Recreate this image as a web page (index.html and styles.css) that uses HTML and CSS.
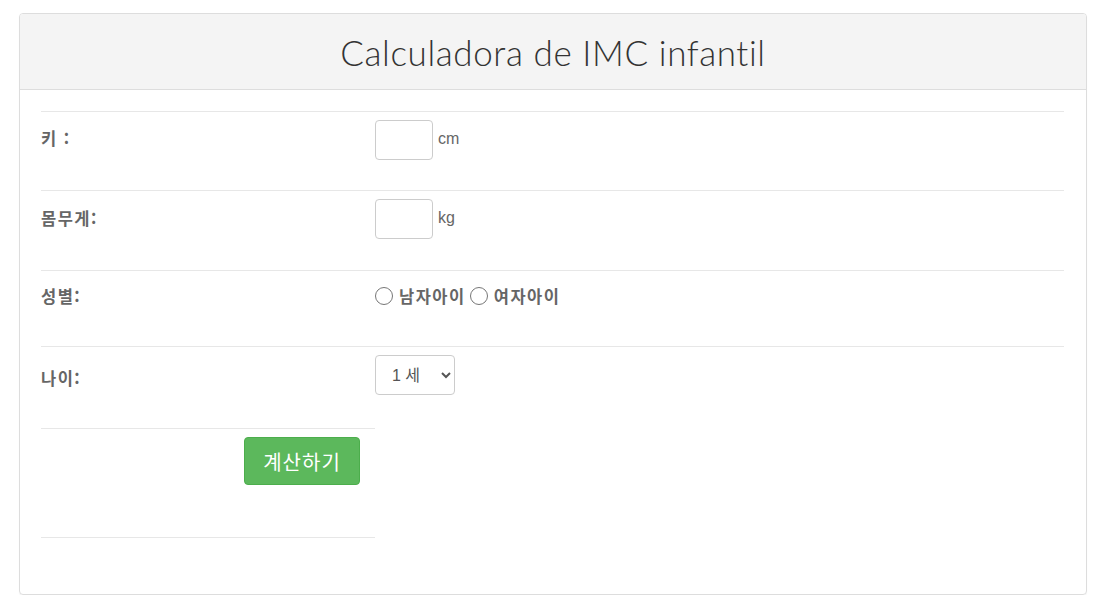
FILE: index.html
```html
<!DOCTYPE html>
<html lang="ko">
<head>
<meta charset="utf-8">
<title>Calculadora de IMC infantil</title>
<link rel="stylesheet" href="styles.css">
</head>
<body>
<div class="page">
  <div class="panel">
    <div class="panel-heading">
      <h1 class="title">Calculadora de IMC infantil</h1>
    </div>
    <div class="panel-body">
      <div class="row row-height">
        <div class="label label-height">키 :</div>
        <div class="value">
          <input class="num-input" type="text">
          <span class="unit">cm</span>
        </div>
      </div>
      <div class="row row-weight">
        <div class="label label-weight">몸무게:</div>
        <div class="value">
          <input class="num-input" type="text">
          <span class="unit">kg</span>
        </div>
      </div>
      <div class="row row-gender">
        <div class="label label-gender">성별:</div>
        <div class="value value-gender">
          <label class="radio"><input type="radio" name="sex">남자아이</label>
          <label class="radio"><input type="radio" name="sex">여자아이</label>
        </div>
      </div>
      <div class="row row-age">
        <div class="label label-age">나이:</div>
        <div class="value">
          <select class="age-select">
            <option>1 세</option>
            <option>2 세</option>
            <option>3 세</option>
          </select>
        </div>
      </div>
      <div class="submit-row">
        <button class="btn-calc" type="button">계산하기</button>
      </div>
    </div>
  </div>
</div>
</body>
</html>
```
FILE: styles.css
```css
html, body {
  margin: 0;
  padding: 0;
  background: #fff;
}
body {
  font-family: "Liberation Sans", Arial, "Noto Sans CJK KR", sans-serif;
  color: #555;
}
.page {
  padding: 13px 10px 0 19px;
}
.panel {
  border: 1px solid #dddddd;
  border-radius: 4px;
  box-shadow: 0 1px 1px rgba(0,0,0,0.05);
  height: 582px;
  box-sizing: border-box;
  overflow: hidden;
}
.panel-heading {
  background: #f4f4f4;
  border-bottom: 1px solid #dddddd;
  height: 75px;
  display: flex;
  align-items: center;
  justify-content: center;
}
.title {
  margin: 0;
  font-family: Lato, "Open Sans", sans-serif;
  font-weight: 300;
  font-size: 35px;
  color: #333;
  letter-spacing: 0.6px;
  padding-top: 1px;
}
.panel-body {
  padding: 21px 22px 0 21px;
}
.row {
  display: grid;
  grid-template-columns: 334px 1fr;
  border-top: 1px solid #e7e7e7;
  box-sizing: border-box;
}
.row-height { height: 79px; }
.row-weight { height: 80px; }
.row-gender { height: 76px; }
.row-age { height: 82px; }
.label {
  font-family: "Noto Sans CJK KR", sans-serif;
  font-weight: 700;
  font-size: 16.5px;
  line-height: 20px;
  letter-spacing: 1.5px;
  color: #666;
}
.label-height { padding-top: 16px; }
.label-weight { padding-top: 17px; }
.label-gender { padding-top: 15px; }
.label-age { padding-top: 21px; }
.value {
  padding-top: 8px;
  display: flex;
  align-items: flex-start;
}
.num-input {
  width: 58px;
  height: 40px;
  box-sizing: border-box;
  border: 1px solid #cccccc;
  border-radius: 4px;
  margin: 0;
  padding: 0 6px;
  font-size: 15px;
}
.unit {
  margin-left: 5px;
  font-size: 16px;
  line-height: 20px;
  padding-top: 9px;
  color: #666;
  font-family: "Liberation Sans", Arial, sans-serif;
}
.value-gender {
  padding-top: 15px;
  gap: 4px;
}
.radio {
  display: flex;
  align-items: center;
  font-weight: 700;
  font-size: 16.5px;
  line-height: 20px;
  letter-spacing: 1.5px;
  color: #666;
  font-family: "Noto Sans CJK KR", sans-serif;
}
.radio input {
  margin: 0 6px 0 0;
  width: 18px;
  height: 18px;
}
.age-select {
  width: 80px;
  height: 40px;
  box-sizing: border-box;
  border: 1px solid #cccccc;
  border-radius: 4px;
  background: #fff;
  color: #555;
  font-size: 16px;
  padding: 0 8px 0 12px;
  margin: 0;
  font-family: "Liberation Sans", Arial, "Noto Sans CJK KR", sans-serif;
}
.submit-row {
  width: 334px;
  height: 110px;
  box-sizing: border-box;
  border-top: 1px solid #e7e7e7;
  border-bottom: 1px solid #e7e7e7;
  display: flex;
  justify-content: flex-end;
  align-items: flex-start;
  padding: 8px 15px 0 0;
}
.btn-calc {
  width: 116px;
  height: 48px;
  background: #5cb85c;
  border: 1px solid #4cae4c;
  border-radius: 4px;
  color: #fff;
  font-size: 20px;
  letter-spacing: 1px;
  font-family: "Noto Sans CJK KR", sans-serif;
  padding: 0;
  cursor: pointer;
}
```
